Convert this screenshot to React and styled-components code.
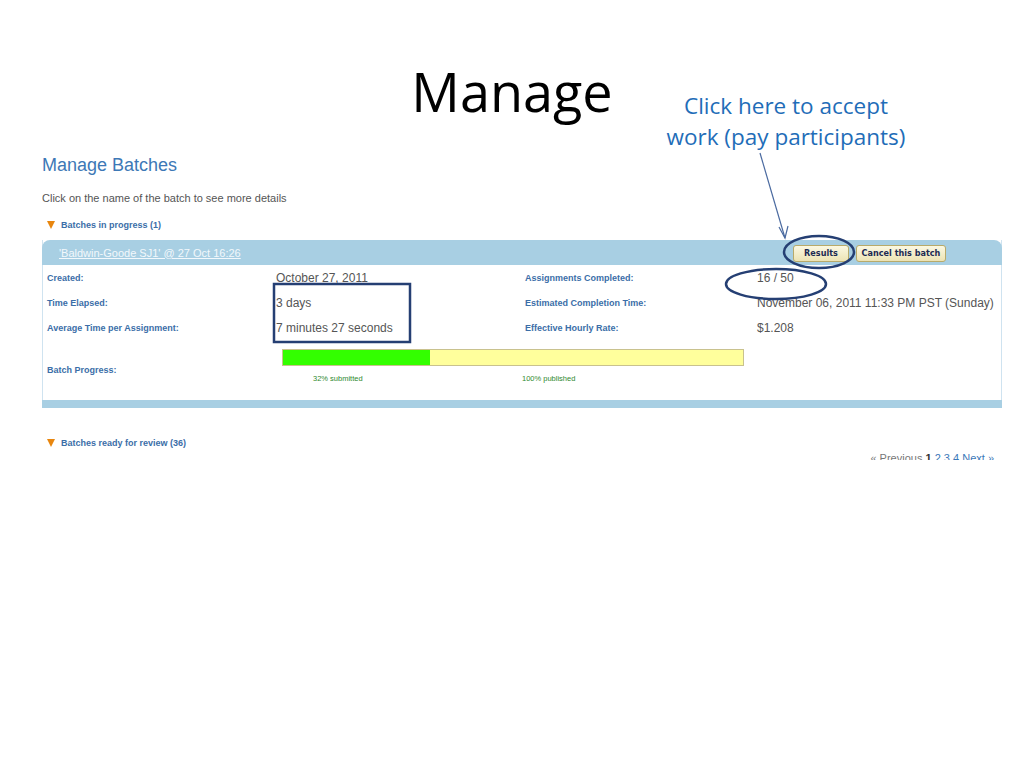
import styled, { createGlobalStyle } from 'styled-components'

const GlobalStyle = createGlobalStyle`
  html, body {
    margin: 0;
    padding: 0;
    background: #ffffff;
  }
`

// The slide itself
const Slide = styled.div`
  position: relative;
  width: 1024px;
  height: 768px;
  background: #ffffff;
  overflow: hidden;
`
const Title = styled.h1`
  margin: 0;
  padding-top: 61px;
  height: 92px;
  box-sizing: border-box;
  text-align: center;
  font-family: 'Open Sans', sans-serif;
  font-weight: 400;
  font-size: 54px;
  line-height: 60px;
  color: #000000;
`
const Callout = styled.div`
  position: absolute;
  left: 640px;
  top: 90px;
  width: 292px;
  text-align: center;
  font-family: 'Open Sans', sans-serif;
  font-size: 22.5px;
  line-height: 31px;
  color: #1f6db8;
`

// The captured web page, cut off at the bottom like the pasted screenshot
const Shot = styled.div`
  margin: 59px 22px 0 42px;
  height: 309px;
  overflow: hidden;
  font-family: 'Liberation Sans', Arial, sans-serif;
`
const PageTitle = styled.h2`
  margin: 0;
  height: 40px;
  padding-top: 3px;
  box-sizing: border-box;
  font-size: 18px;
  font-weight: 400;
  line-height: 22px;
  color: #3d78b6;
`
const Intro = styled.p`
  margin: 0;
  height: 22px;
  font-size: 11px;
  line-height: 14px;
  color: #555555;
`
const Section = styled.div`
  display: flex;
  align-items: center;
  gap: 6px;
  height: ${(p) => p.$h}px;
  padding-left: 5px;
  padding-top: ${(p) => p.$top || 0}px;
  padding-bottom: ${(p) => p.$bottom || 0}px;
  box-sizing: border-box;
  font-size: 9px;
  font-weight: 700;
  color: #3b6ea8;
`
const Triangle = styled.span`
  width: 0;
  height: 0;
  border-left: 4px solid transparent;
  border-right: 4px solid transparent;
  border-top: 8px solid #e8860f;
`
const Panel = styled.div`
  border-left: 1px solid #cfe3f0;
  border-right: 1px solid #cfe3f0;
`
const PanelHead = styled.div`
  display: flex;
  align-items: center;
  justify-content: space-between;
  height: 25px;
  padding: 0 56px 0 17px;
  background: #a8cfe3;
  border-radius: 8px 8px 0 0;
  margin: 0 -1px;
`
const BatchLink = styled.a`
  font-size: 11px;
  color: #f2f8fc;
  text-decoration: underline;
`
const Buttons = styled.div`
  display: flex;
  gap: 7px;
  padding-top: 1px;
`
const Button = styled.button`
  height: 17px;
  width: ${(p) => p.$w}px;
  padding: 0;
  border: 1px solid #b8aa6a;
  border-radius: 3px;
  background: linear-gradient(#fbf8e2, #ece3b4);
  font-family: 'DejaVu Sans Condensed', 'Liberation Sans', sans-serif;
  font-size: 9px;
  font-weight: 700;
  color: #1c2a52;
`
const Grid = styled.div`
  display: grid;
  grid-template-columns: 229px 249px 232px 1fr;
  padding-left: 4px;
`
const Label = styled.div`
  height: 25px;
  display: flex;
  align-items: center;
  font-size: 9px;
  font-weight: 700;
  color: #3b6ea8;
`
const Value = styled.div`
  height: 25px;
  display: flex;
  align-items: center;
  font-size: 12px;
  color: #555555;
`
const ProgressRow = styled.div`
  display: grid;
  grid-template-columns: 235px 1fr;
  align-items: center;
  height: 60px;
  padding-left: 4px;
`
const ProgressCell = styled.div`
  padding-top: 9px;
  align-self: start;
`
const Bar = styled.div`
  display: flex;
  width: 460px;
  height: 15px;
  border: 1px solid #c9c28e;
  background: #ffff9c;
`
const Fill = styled.div`
  background: #33ff00;
`
const Captions = styled.div`
  display: flex;
  padding-left: 31px;
  margin-top: 8px;
  font-size: 7.5px;
  color: #2f8a2f;
`
const Caption = styled.span`
  width: ${(p) => p.$w}px;
`
const PanelFoot = styled.div`
  height: 8px;
  background: #a8cfe3;
  margin: 0 -1px;
`
const Pager = styled.div`
  margin-top: 2px;
  text-align: right;
  padding-right: 8px;
  font-size: 11px;
  line-height: 14px;
  color: #777777;
`
const PageNum = styled.span`
  color: ${(p) => (p.$current ? '#333333' : '#3b78b8')};
  font-weight: ${(p) => (p.$current ? 700 : 400)};
`

// Marks drawn over the picture
const Marks = styled.svg`
  position: absolute;
  left: 0;
  top: 0;
  pointer-events: none;
`

const rows = [
  ['Created:', 'October 27, 2011', 'Assignments Completed:', '16 / 50'],
  ['Time Elapsed:', '3 days', 'Estimated Completion Time:', 'November 06, 2011 11:33 PM PST (Sunday)'],
  ['Average Time per Assignment:', '7 minutes 27 seconds', 'Effective Hourly Rate:', '$1.208'],
]

export default function App() {
  const submitted = 32
  return (
    <Slide>
      <GlobalStyle />
      <Title>Manage</Title>
      <Callout>
        Click here to accept
        <br />
        work (pay participants)
      </Callout>

      <Shot>
        <PageTitle>Manage Batches</PageTitle>
        <Intro>Click on the name of the batch to see more details</Intro>
        <Section $h={27} $bottom={4}>
          <Triangle />
          Batches in progress (1)
        </Section>
        <Panel>
          <PanelHead>
            <BatchLink>'Baldwin-Goode SJ1' @ 27 Oct 16:26</BatchLink>
            <Buttons>
              <Button $w={56}>Results</Button>
              <Button $w={90}>Cancel this batch</Button>
            </Buttons>
          </PanelHead>
          <Grid>
            {rows.map((r) => (
              <>
                <Label key={r[0]}>{r[0]}</Label>
                <Value>{r[1]}</Value>
                <Label>{r[2]}</Label>
                <Value>{r[3]}</Value>
              </>
            ))}
          </Grid>
          <ProgressRow>
            <Label>Batch Progress:</Label>
            <ProgressCell>
              <Bar>
                <Fill style={{ width: `${submitted}%` }} />
              </Bar>
              <Captions>
                <Caption $w={209}>32% submitted</Caption>
                <Caption>100% published</Caption>
              </Captions>
            </ProgressCell>
          </ProgressRow>
          <PanelFoot />
        </Panel>
        <Section $h={41} $top={28}>
          <Triangle />
          Batches ready for review (36)
        </Section>
        <Pager>
          « Previous <PageNum $current>1</PageNum> <PageNum>2</PageNum> <PageNum>3</PageNum>{' '}
          <PageNum>4</PageNum> <PageNum>Next »</PageNum>
        </Pager>
      </Shot>

      <Marks width="1024" height="768" viewBox="0 0 1024 768">
        <g fill="none" stroke="#253f73" strokeWidth="2.5">
          <rect x="274" y="284" width="136" height="58" />
          <ellipse cx="776" cy="284" rx="50" ry="15" />
          <ellipse cx="819" cy="252" rx="35" ry="16" />
        </g>
        <g fill="none" stroke="#4a6aa0" strokeWidth="1.2">
          <line x1="760" y1="153" x2="785" y2="238" />
          <polyline points="779,227 785,238 788,226" />
        </g>
      </Marks>
    </Slide>
  )
}
